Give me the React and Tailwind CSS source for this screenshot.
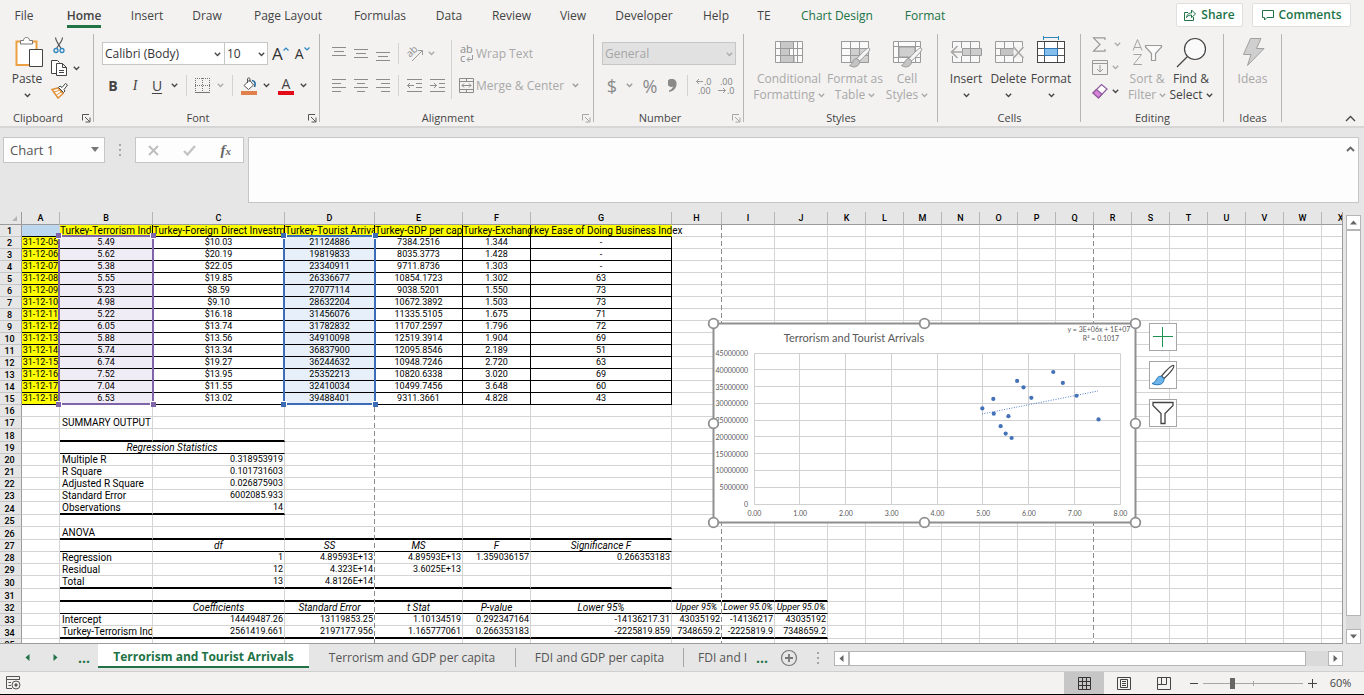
import React from "react";

const MENU = [
  { label: "File", w: "w-[48px]" },
  { label: "Home", w: "w-[72px]", active: true },
  { label: "Insert", w: "w-[54px]" },
  { label: "Draw", w: "w-[66px]" },
  { label: "Page Layout", w: "w-[96px]" },
  { label: "Formulas", w: "w-[88px]" },
  { label: "Data", w: "w-[50px]" },
  { label: "Review", w: "w-[75px]" },
  { label: "View", w: "w-[48px]" },
  { label: "Developer", w: "w-[94px]" },
  { label: "Help", w: "w-[50px]" },
  { label: "TE", w: "w-[46px]" },
  { label: "Chart Design", w: "w-[100px]", green: true },
  { label: "Format", w: "w-[76px]", green: true },
];

function Chevron({ className = "text-[#444]" }) {
  return (
    <svg width="7" height="5" viewBox="0 0 7 5" className={`shrink-0 ${className}`} fill="none" stroke="currentColor" strokeWidth="1.3">
      <path d="M0.8 0.8 3.5 3.5 6.2 0.8" />
    </svg>
  );
}

function Launcher({ dim }) {
  return (
    <button aria-label="More options" className={`absolute right-[3px] bottom-[3px] ${dim ? "text-[#a6a6a6]" : "text-[#555]"}`}>
      <svg width="9" height="9" viewBox="0 0 9 9" fill="none" stroke="currentColor">
        <path d="M0.5 6.5V0.5H7M3 3 7.5 7.5M8 3.5V8H3.5" />
      </svg>
    </button>
  );
}

function Group({ label, width, launcher, dimLauncher, children }) {
  return (
    <section aria-label={label} className={`relative flex shrink-0 flex-col ${width}`}>
      <div className="flex h-[79px] items-start">{children}</div>
      <div className={`text-center text-[11px] leading-4 text-[#444] ${launcher ? "pr-[18px]" : ""}`}>{label}</div>
      {launcher && <Launcher dim={dimLauncher} />}
      <div className="absolute top-[3px] right-0 bottom-1 w-px bg-[#b5b5b5]" />
    </section>
  );
}

function Big({ width, lines, dim, children }) {
  const tone = dim ? "text-[#a8a8a8]" : "text-[#444]";
  return (
    <button className={`flex shrink-0 flex-col items-center pt-[5px] text-xs leading-4 whitespace-nowrap ${width} ${tone}`}>
      <span className="mb-px block h-[34px]">{children}</span>
      <span>{lines[0]}</span>
      <span className="flex h-4 items-center gap-[3px]">
        {lines[1]}
        {lines[1] !== undefined && <Chevron className={tone} />}
      </span>
    </button>
  );
}

function Lines({ rows }) {
  return (
    <svg width="14" height="16" viewBox="0 0 14 16" stroke="#8c8c8c" fill="none">
      {rows.map(([x1, x2, y]) => (
        <path key={y} d={`M${x1} ${y}.5H${x2}`} />
      ))}
    </svg>
  );
}

function Sep() {
  return <div className="h-[21px] w-px shrink-0 bg-[#d2d2d2]" />;
}

function SheetGlyph({ kind }) {
  const line = kind === "format" ? "#444" : "#9a9a9a";
  return (
    <svg width="32" height="34" viewBox="0 0 32 34" fill="none" stroke={line}>
      {kind === "conditional" && (
        <g>
          <path d="M2.5 5.5H29.5V26.5H2.5Z" fill="#fafafa" />
          <path d="M7 6H20V12H7ZM7 13H16V19H7ZM7 20H22V26H7Z" fill="#c8c8c8" stroke="none" />
          <path d="M2.5 12.5H29.5M2.5 19.5H29.5M7.5 5.5V26.5M20.5 5.5V26.5M24.5 5.5V26.5M16.5 12V20" />
        </g>
      )}
      {(kind === "table" || kind === "cell") && (
        <g>
          <path d="M2.5 5.5H29.5V26.5H2.5Z" fill="#fafafa" />
          {kind === "table" ? <path d="M11 12H29V26H11Z" fill="#cfcfcf" stroke="none" /> : <path d="M8 11H24V21H8Z" fill="#cfcfcf" />}
          {kind === "table" ? (
            <path d="M2.5 5.5H29.5V26.5H2.5ZM2.5 12.5H29.5M2.5 19.5H29.5M11.5 5.5V26.5M20.5 5.5V26.5" />
          ) : (
            <path d="M2.5 10.5H29.5M2.5 21.5H29.5M7.5 5.5V26.5M24.5 5.5V26.5" />
          )}
          <path d="M30 12C32 13 30.5 16 20.5 25L18 22.5C25 14.5 29 11.5 30 12Z" fill="#f5f5f5" />
          <path d="M18 22.5C14 22 14 28 10.5 29.5C16 33 21 29.5 20.5 25Z" fill="#c4c4c4" />
        </g>
      )}
      {(kind === "insert" || kind === "delete") && (
        <g>
          <path d="M2.5 5.5H29.5V26.5H2.5ZM2.5 12.5H29.5M2.5 19.5H29.5M11.5 5.5V26.5M20.5 5.5V26.5" fill="#f8f8f8" />
          {kind === "insert" ? (
            <g>
              <path d="M12.5 12.5H31.5V19.5H12.5Z" fill="#cdcdcd" />
              <path d="M20.5 12.5V19.5" />
              <path d="M0 12H12V20H0Z" fill="#f3f2f1" stroke="none" />
              <path d="M13 16H1.5M7.5 10 1.5 16 7.5 22" strokeWidth="1.5" stroke="#a5a5a5" />
            </g>
          ) : (
            <g>
              <path d="M7.5 12.5H19L22 16 19 19.5H7.5Z" fill="#c4c4c4" />
              <path d="M20.5 10.5H31V22H20.5Z" fill="#f3f2f1" stroke="none" />
              <path d="M20.5 11 30.5 22M30.5 11 20.5 22" strokeWidth="1.5" stroke="#a5a5a5" />
            </g>
          )}
        </g>
      )}
      {kind === "format" && (
        <g>
          <path d="M2.5 5.5H29.5V26.5H2.5Z" fill="#fff" />
          <path d="M9.5 12.5H22.5V19.5H9.5Z" fill="#83beec" stroke="none" />
          <path d="M2.5 12.5H29.5M2.5 19.5H29.5M9.5 5.5V26.5M22.5 5.5V26.5" stroke="#555" />
          <path d="M9.5 12.5H22.5V19.5H9.5Z" stroke="#2e75b6" />
          <path d="M8.5 1.5H23.5M8.5 0V4M23.5 0V4" stroke="#2f86b8" />
          <path d="M2.5 5.5H29.5V26.5H2.5Z" />
        </g>
      )}
    </svg>
  );
}

function Ribbon() {
  return (
    <div className="flex h-[95px] shrink-0 overflow-hidden bg-[#f3f2f1]">
      <Group label="Clipboard" width="w-[94px]" launcher>
        <div className="flex pt-[6px] pl-[11px]">
          <button className="flex w-8 flex-col items-center text-xs leading-4 text-[#444]">
            <svg width="30" height="34" viewBox="0 0 30 34" fill="none" className="ml-1">
              <path d="M2.5 4.5H22.5V28H2.5Z" fill="#fff" stroke="#eda043" strokeWidth="2" />
              <path d="M6.5 7V3.5H9.5C9.5 -0.5 15.5 -0.5 15.5 3.5H18.5V7Z" fill="#fff" stroke="#777" />
              <path d="M15.5 12.5H28.5V29.5H15.5Z" fill="#fff" stroke="#444" />
            </svg>
            Paste
            <span className="flex h-4 items-center"><Chevron /></span>
          </button>
          <div className="flex flex-col gap-[6px] pl-2">
            <button aria-label="Cut">
              <svg width="16" height="17" viewBox="0 0 16 17" fill="none">
                <path d="M4.5 0.5C4.5 4 7.5 6.5 10 11.5M11.5 0.5C11.5 4 8 7 5.5 11.5" stroke="#555" strokeWidth="1.2" />
                <circle cx="5" cy="13.5" r="2" stroke="#2e86c1" strokeWidth="1.3" />
                <circle cx="11" cy="13.5" r="2" stroke="#2e86c1" strokeWidth="1.3" />
              </svg>
            </button>
            <button aria-label="Copy" className="flex items-center gap-[5px]">
              <svg width="17" height="17" viewBox="0 0 17 17" fill="#fff" stroke="#444">
                <path d="M6.5 13.5H0.5V0.5H6.5L8.5 2.5" />
                <path d="M5.5 3.5H11.5L15.5 7.5V15.5H5.5ZM11.5 3.5V7.5H15.5M8 10.5H13M8 12.5H13" />
              </svg>
              <Chevron />
            </button>
            <button aria-label="Format Painter">
              <svg width="18" height="16" viewBox="0 0 18 16" fill="none">
                <path d="M1 6.5 7 5 12 10.5 7 15Z" fill="#fff" stroke="#e0913a" strokeWidth="1.6" />
                <path d="M3 9 8 7.5M5.5 12 10 9" stroke="#e0913a" />
                <path d="M7.5 4.5 9 3 11 4.5 14.5 0.5 16.5 2 13 6.5 14 8 12.5 9.5Z" fill="#fff" stroke="#444" />
              </svg>
            </button>
          </div>
        </div>
      </Group>

      <Group label="Font" width="w-[226px]" launcher>
        <div className="flex flex-col gap-[10px] pt-[11px] pl-2">
          <div className="flex h-[23px] items-center text-xs text-[#333]">
            <div className="relative">
              <select aria-label="Font" className="h-[23px] w-[123px] appearance-none border border-[#c6c6c6] bg-white pl-[2px]">
                <option>Calibri (Body)</option>
              </select>
              <Chevron className="pointer-events-none absolute top-[10px] right-1 text-[#444]" />
            </div>
            <div className="relative">
              <select aria-label="Font size" className="h-[23px] w-[43px] appearance-none border border-l-0 border-[#c6c6c6] bg-white pl-[2px]">
                <option>10</option>
              </select>
              <Chevron className="pointer-events-none absolute top-[10px] right-[3px] text-[#444]" />
            </div>
            <button aria-label="Increase font size" className="ml-1 flex items-start text-[17px] leading-5">
              A<svg width="6" height="4" viewBox="0 0 6 4" className="mt-[3px]" fill="none" stroke="#2e86c1" strokeWidth="1.2"><path d="M0.5 3.5 3 1 5.5 3.5" /></svg>
            </button>
            <button aria-label="Decrease font size" className="ml-[6px] flex items-start text-[14px] leading-5">
              A<svg width="6" height="4" viewBox="0 0 6 4" className="mt-[3px]" fill="none" stroke="#2e86c1" strokeWidth="1.2"><path d="M0.5 0.5 3 3 5.5 0.5" /></svg>
            </button>
          </div>
          <div className="flex h-[21px] items-center text-sm leading-5 text-[#444]">
            <button className="w-[22px] font-bold">B</button>
            <button className="w-[22px] font-['Liberation_Serif',serif] italic">I</button>
            <button className="w-[22px] underline underline-offset-2">U</button>
            <button aria-label="Underline style" className="w-[18px] pl-[3px]"><Chevron /></button>
            <Sep />
            <button aria-label="Borders" className="flex w-[45px] items-center gap-[7px] pl-2">
              <svg width="15" height="15" viewBox="0 0 15 15" fill="none" stroke="#777">
                <path d="M0.5 0V14M14.5 0V14M7.5 0V14M0 0.5H15M0 7.5H15" strokeDasharray="1 1" />
                <path d="M0 14.5H15" />
              </svg>
              <Chevron className="text-[#aaa]" />
            </button>
            <Sep />
            <button aria-label="Fill color" className="flex w-[45px] items-center gap-[6px] pl-2">
              <svg width="16" height="18" viewBox="0 0 16 18" fill="none">
                <path d="M3 8.5 8.5 3 12.5 8 7.5 12.5Z" fill="#fff" stroke="#555" />
                <path d="M6.5 6V2C6.5 0.5 9 0.5 9 2V5" stroke="#555" />
                <path d="M11 3.5C14.5 4 14.5 7 13.5 10" stroke="#2368a0" strokeWidth="1.6" />
                <path d="M0 14H16V18H0Z" fill="#e0804a" />
              </svg>
              <Chevron />
            </button>
            <button aria-label="Font color" className="flex items-center gap-[6px]">
              <span className="flex h-[18px] w-4 flex-col items-center justify-end border-b-4 border-[#e30b17] text-[14px] leading-[15px]">A</span>
              <Chevron />
            </button>
          </div>
        </div>
      </Group>

      <Group label="Alignment" width="w-[274px]" launcher dimLauncher>
        <div className="flex flex-col gap-[10px] pt-[11px] pl-3">
          <div className="flex h-[23px] items-center gap-2">
            <button aria-label="Top align"><Lines rows={[[0, 14, 1], [2, 12, 5], [0, 14, 9]]} /></button>
            <button aria-label="Middle align"><Lines rows={[[0, 14, 3], [2, 12, 7], [0, 14, 11]]} /></button>
            <button aria-label="Bottom align"><Lines rows={[[0, 14, 6], [2, 12, 10], [0, 14, 14]]} /></button>
            <Sep />
            <button aria-label="Orientation" className="flex items-center gap-[5px]">
              <svg width="16" height="18" viewBox="0 0 16 18" fill="none" stroke="#999">
                <text x="1" y="12" fontSize="10" fill="#8c8c8c" stroke="none" transform="rotate(-45 3 10)">ab</text>
                <path d="M5 16 15 6M11 5.5H15.5V10" />
              </svg>
              <Chevron className="text-[#aaa]" />
            </button>
          </div>
          <div className="flex h-[21px] items-center gap-2">
            <button aria-label="Align left"><Lines rows={[[0, 14, 1], [0, 9, 5], [0, 14, 9], [0, 9, 13]]} /></button>
            <button aria-label="Center"><Lines rows={[[0, 14, 1], [3, 11, 5], [0, 14, 9], [3, 11, 13]]} /></button>
            <button aria-label="Align right"><Lines rows={[[0, 14, 1], [5, 14, 5], [0, 14, 9], [5, 14, 13]]} /></button>
            <Sep />
            <button aria-label="Decrease indent">
              <svg width="15" height="16" viewBox="0 0 15 16" fill="none" stroke="#8c8c8c">
                <path d="M0 1.5H15M9 5.5H15M9 9.5H15M0 13.5H15M7 7.5H0.5M3 5 0.5 7.5 3 10" />
              </svg>
            </button>
            <button aria-label="Increase indent">
              <svg width="15" height="16" viewBox="0 0 15 16" fill="none" stroke="#8c8c8c">
                <path d="M0 1.5H15M9 5.5H15M9 9.5H15M0 13.5H15M0 7.5H6.5M4 5 6.5 7.5 4 10" />
              </svg>
            </button>
          </div>
        </div>
        <div className="mt-[9px] ml-[6px] h-[59px] w-px bg-[#d2d2d2]" />
        <div className="flex flex-col gap-[10px] pt-[11px] pl-[7px] text-xs text-[#a8a8a8]">
          <button className="flex h-[23px] items-center gap-[2px]">
            <svg width="15" height="20" viewBox="0 0 15 20" fill="none" stroke="#999" fontSize="11">
              <text x="1" y="9" fill="#8c8c8c" stroke="none">ab</text>
              <text x="1" y="18" fill="#8c8c8c" stroke="none">c</text>
              <path d="M13.5 11V15.5H8.5M10.5 13 8 15.5 10.5 18" />
            </svg>
            Wrap Text
          </button>
          <button className="flex h-[21px] items-center gap-[2px]">
            <svg width="15" height="15" viewBox="0 0 15 15" fill="none" stroke="#8c8c8c">
              <path d="M0.5 0.5H14.5V14.5H0.5ZM0.5 3.5H14.5M0.5 11.5H14.5M7.5 0.5V3.5M7.5 11.5V14.5M3 7.5H12M5 5.5 3 7.5 5 9.5M10 5.5 12 7.5 10 9.5" />
            </svg>
            Merge &amp; Center
            <Chevron className="ml-[6px] text-[#999]" />
          </button>
        </div>
      </Group>

      <Group label="Number" width="w-[150px]" launcher dimLauncher>
        <div className="flex flex-col gap-[10px] pt-[11px] pl-2">
          <div className="relative">
            <select aria-label="Number format" className="block h-[23px] w-[134px] appearance-none border border-[#c6c6c6] bg-[#e1e1e1] pl-[2px] text-xs text-[#a6a6a6]">
              <option>General</option>
            </select>
            <Chevron className="pointer-events-none absolute top-[10px] right-[3px] text-[#aaa]" />
          </div>
          <div className="flex h-[21px] items-center text-[18px] leading-5 text-[#8a8a8a]">
            <button className="w-[24px] pr-1" aria-label="Accounting format">$</button>
            <button className="w-[14px]" aria-label="Currency list"><Chevron className="text-[#999]" /></button>
            <button className="w-[20px]">%</button>
            <button className="ml-1 w-[23px] pl-1" aria-label="Comma style">
              <svg width="9" height="13" viewBox="0 0 9 13" fill="#8a8a8a"><path d="M4 0A4 4 0 1 0 5 7.5C4.5 9.5 3 10.5 1 11.5V13C6 12 9 8.5 8.5 4A4.2 4.2 0 0 0 4 0Z" /></svg>
            </button>
            <Sep />
            <div className="flex gap-[5px] pl-2">
              <button aria-label="Increase decimal">
                <svg width="17" height="18" viewBox="0 0 17 18" fontSize="9" fill="#808080">
                  <text x="8" y="8">.0</text><text x="2" y="17">.00</text>
                  <path d="M7 4.5H0.5M3 2 0.5 4.5 3 7" fill="none" stroke="#999" />
                </svg>
              </button>
              <button aria-label="Decrease decimal">
                <svg width="17" height="18" viewBox="0 0 17 18" fontSize="9" fill="#808080">
                  <text x="2" y="8">.00</text><text x="9" y="17">.0</text>
                  <path d="M0 13.5H7.5M5 11 7.5 13.5 5 16" fill="none" stroke="#999" />
                </svg>
              </button>
            </div>
          </div>
        </div>
      </Group>

      <Group label="Styles" width="w-[194px]">
        <div className="flex pl-2">
          <Big width="w-[74px]" dim lines={["Conditional", "Formatting"]}><SheetGlyph kind="conditional" /></Big>
          <Big width="w-[58px]" dim lines={["Format as", "Table"]}><SheetGlyph kind="table" /></Big>
          <Big width="w-[46px]" dim lines={["Cell", "Styles"]}><SheetGlyph kind="cell" /></Big>
        </div>
      </Group>

      <Group label="Cells" width="w-[143px]">
        <div className="flex pl-[7px]">
          <Big width="w-[42px]" lines={["Insert", ""]}><SheetGlyph kind="insert" /></Big>
          <Big width="w-[43px]" lines={["Delete", ""]}><SheetGlyph kind="delete" /></Big>
          <Big width="w-[42px]" lines={["Format", ""]}><SheetGlyph kind="format" /></Big>
        </div>
      </Group>

      <Group label="Editing" width="w-[143px]">
        <div className="flex w-[43px] flex-col gap-2 pt-[6px] pl-[11px]">
          <button aria-label="AutoSum" className="flex items-center gap-[7px]">
            <svg width="15" height="15" viewBox="0 0 15 15" fill="none" stroke="#999" strokeWidth="1.2"><path d="M13 3V0.8H1.5L8 7.5 1.5 14.2H13V12" /></svg>
            <Chevron className="text-[#aaa]" />
          </button>
          <button aria-label="Fill" className="flex items-center gap-1">
            <svg width="16" height="15" viewBox="0 0 16 15" fill="none" stroke="#999"><path d="M0.5 0.5H15.5V14.5H0.5ZM0.5 3.5H15.5M8 5V12M5 9 8 12 11 9" /></svg>
            <Chevron className="text-[#aaa]" />
          </button>
          <button aria-label="Clear" className="flex items-center gap-1">
            <svg width="16" height="16" viewBox="0 0 16 16" fill="none" stroke="#8e5a9b" strokeWidth="1.2">
              <path d="M1 10 9.5 1.5 15 6 6.5 15Z" fill="#fff" />
              <path d="M1 10 4.5 6.5 10 11 6.5 15Z" fill="#d884d8" />
            </svg>
            <Chevron />
          </button>
        </div>
        <Big width="w-[46px]" dim lines={["Sort &", "Filter"]}>
          <svg width="32" height="34" viewBox="0 0 32 34" fill="none" stroke="#999">
            <path d="M2 14.5 6.5 3.5 11 14.5M3.5 11.5H9.5M2.5 18.5H10.5L2.5 28.5H11" stroke="#a3a3a3" />
            <path d="M14.5 9.5H30.5V11L24.5 17.5V24.5H20.5V17.5L14.5 11Z" strokeWidth="1.2" fill="#fafafa" />
          </svg>
        </Big>
        <Big width="w-[42px]" lines={["Find &", "Select"]}>
          <svg width="32" height="34" viewBox="0 0 32 34" fill="none" stroke="#444" strokeWidth="1.2">
            <circle cx="20" cy="13" r="10.5" fill="#fafafa" /><path d="M12.5 20.5 2 31" />
          </svg>
        </Big>
      </Group>

      <Group label="Ideas" width="w-[58px]">
        <Big width="w-[57px]" dim lines={["Ideas"]}>
          <svg width="24" height="34" viewBox="0 0 24 34" fill="#cfcfcf" stroke="#a0a0a0"><path d="M9.5 2.5H20L15.5 12.5H23L6.5 29.5L10 18.5H2.5Z" /></svg>
        </Big>
      </Group>
      <div className="flex flex-1 items-end justify-end pr-2 pb-1">
        <button aria-label="Collapse ribbon">
          <svg width="11" height="7" viewBox="0 0 11 7" fill="none" stroke="#444" strokeWidth="1.3"><path d="M1 6 5.5 1.5 10 6" /></svg>
        </button>
      </div>
    </div>
  );
}

function FormulaBar() {
  return (
    <div className="flex h-[84px] shrink-0 items-start bg-[#e6e6e6] pt-[9px] pr-[5px] pl-[3px]">
      <div className="relative">
        <input aria-label="Name box" defaultValue="Chart 1" className="block h-[26px] w-[102px] border border-[#c6c6c6] bg-[#fdfdfd] pl-[6px] text-[13px] text-[#555]" />
        <svg width="8" height="5" viewBox="0 0 8 5" className="absolute top-[10px] right-[6px]" fill="#777"><path d="M0 0H8L4 5Z" /></svg>
      </div>
      <svg width="30" height="26" viewBox="0 0 30 26" fill="#a6a6a6"><path d="M14 7h2v2h-2zM14 12h2v2h-2zM14 17h2v2h-2z" /></svg>
      <div className="mr-1 flex h-[26px] w-[109px] items-center justify-around border border-[#c6c6c6] bg-[#fdfdfd]">
        <button aria-label="Cancel"><svg width="11" height="11" viewBox="0 0 11 11" stroke="#bdbdbd" strokeWidth="1.8"><path d="M1 1 10 10M10 1 1 10" /></svg></button>
        <button aria-label="Enter"><svg width="13" height="11" viewBox="0 0 13 11" stroke="#c4c4c4" strokeWidth="2.4" fill="none"><path d="M1 6 4.5 9.5 12 1" /></svg></button>
        <button aria-label="Insert function" className="font-['Liberation_Serif',serif] text-[15px] leading-5 font-bold text-[#666] italic">f<span className="text-[11px]">x</span></button>
      </div>
      <div className="relative flex-1">
        <textarea aria-label="Formula" className="block h-[66px] w-full resize-none border border-[#c6c6c6] bg-[#fdfdfd]" />
        <svg width="9" height="6" viewBox="0 0 9 6" className="absolute top-[9px] right-1" fill="none" stroke="#666" strokeWidth="1.8"><path d="M1 5 4.5 1.5 8 5" /></svg>
      </div>
    </div>
  );
}

const COLS = "ABCDEFGHIJKLMNOPQRSTUVWX".split("");
const COL_W = [38, 93, 132, 90, 88, 68, 141, 50, 53, 53, 38, 38, 38, 38, 38, 38, 38, 38, 38, 38, 38, 38, 38, 38];
const TABLE_W = 22 + COL_W.reduce((a, b) => a + b, 0);

const DATA = [
  ["31-12-05", "5.49", "$10.03", "21124886", "7384.2516", "1.344", "-"],
  ["31-12-06", "5.62", "$20.19", "19819833", "8035.3773", "1.428", "-"],
  ["31-12-07", "5.38", "$22.05", "23340911", "9711.8736", "1.303", "-"],
  ["31-12-08", "5.55", "$19.85", "26336677", "10854.1723", "1.302", "63"],
  ["31-12-09", "5.23", "$8.59", "27077114", "9038.5201", "1.550", "73"],
  ["31-12-10", "4.98", "$9.10", "28632204", "10672.3892", "1.503", "73"],
  ["31-12-11", "5.22", "$16.18", "31456076", "11335.5105", "1.675", "71"],
  ["31-12-12", "6.05", "$13.74", "31782832", "11707.2597", "1.796", "72"],
  ["31-12-13", "5.88", "$13.56", "34910098", "12519.3914", "1.904", "69"],
  ["31-12-14", "5.74", "$13.34", "36837900", "12095.8546", "2.189", "51"],
  ["31-12-15", "6.74", "$19.27", "36244632", "10948.7246", "2.720", "63"],
  ["31-12-16", "7.52", "$13.95", "25352213", "10820.6338", "3.020", "69"],
  ["31-12-17", "7.04", "$11.55", "32410034", "10499.7456", "3.648", "60"],
  ["31-12-18", "6.53", "$13.02", "39488401", "9311.3661", "4.828", "43"],
];

const HEADERS = ["", "Turkey-Terrorism Index", "Turkey-Foreign Direct Investment", "Turkey-Tourist Arrivals", "Turkey-GDP per capita", "Turkey-Exchange", "Turkey Ease of Doing Business Index"];

const LOWER = {
  17: ["", "SUMMARY OUTPUT"],
  20: ["", "Multiple R", "0.318953919"],
  21: ["", "R Square", "0.101731603"],
  22: ["", "Adjusted R Square", "0.026875903"],
  23: ["", "Standard Error", "6002085.933"],
  24: ["", "Observations", "14"],
  26: ["", "ANOVA"],
  27: ["", "", "df", "SS", "MS", "F", "Significance F"],
  28: ["", "Regression", "1", "4.89593E+13", "4.89593E+13", "1.359036157", "0.266353183"],
  29: ["", "Residual", "12", "4.323E+14", "3.6025E+13"],
  30: ["", "Total", "13", "4.8126E+14"],
  32: ["", "", "Coefficients", "Standard Error", "t Stat", "P-value", "Lower 95%", "Upper 95%", "Lower 95.0%", "Upper 95.0%"],
  33: ["", "Intercept", "14449487.26", "13119853.25", "1.10134519", "0.292347164", "-14136217.31", "43035192", "-14136217", "43035192"],
  34: ["", "Turkey-Terrorism Index", "2561419.661", "2197177.956", "1.165777061", "0.266353183", "-2225819.859", "7348659.2", "-2225819.9", "7348659.2"],
};

const RULES = { 18: [2, 2], 19: [1, 2], 24: [2, 2], 26: [2, 6], 27: [1, 6], 30: [2, 6], 31: [2, 9], 32: [1, 9], 34: [2, 9] };

function Cell({ row, col, span }) {
  let text = "";
  let bg = "bg-white";
  let box = "justify-center overflow-hidden text-[9px]";
  let right = "border-r-[#d4d4d4]";
  let bottom = "border-b border-b-[#d4d4d4]";
  if (row === 1) {
    text = HEADERS[col] || "";
    if (col === 0) bg = "bg-[#bdd7ee]";
    else if (col < 7) {
      bg = "bg-[#ffff00]";
      right = col < 6 ? "border-r-black" : "border-r-[#ffff00]";
      box = col === 6 ? "justify-center text-[10px] [clip-path:inset(0_-12px_0_0)]" : "justify-start overflow-hidden text-[10px]";
    }
    if (col < 7) bottom = "border-b border-b-black";
  } else if (row <= 15) {
    text = DATA[row - 2][col] || "";
    if (col < 7) {
      bottom = "border-b border-b-black";
      right = "border-r-black";
      if (col === 0) {
        bg = "bg-[#ffff00]";
        box = "justify-end overflow-hidden pr-px text-[9px]";
      }
      if (col === 1) bg = "bg-[#f0ecf6]";
      if (col === 3) bg = "bg-[#e7f0fa]";
    }
  } else {
    text = (LOWER[row] || [])[col] || "";
    if (row === 19 && col === 1) text = "Regression Statistics";
    if (row === 27 || row === 32 || row === 19) box = col < 7 ? "justify-center overflow-hidden text-[10px] italic" : "justify-center overflow-hidden text-[9px] italic";
    else if (col === 1) box = "justify-start overflow-hidden pl-[2px] text-[10px]";
    else box = "justify-end overflow-hidden pr-px text-[9px]";
    const rule = RULES[row];
    if (rule && col >= 1 && col <= rule[1]) bottom = rule[0] === 2 ? "border-b-2 border-b-black" : "border-b border-b-black";
  }
  return (
    <td colSpan={span} className={`border-r p-0 ${bg} ${right} ${bottom}`}>
      <div className={`flex h-[11px] leading-[11px] whitespace-nowrap text-black ${box}`}>{text}</div>
    </td>
  );
}

function Grid() {
  return (
    <table className="table-fixed border-separate border-spacing-0 font-[Roboto,sans-serif]" style={{ width: TABLE_W }}>
      <colgroup>
        <col style={{ width: 22 }} />
        {COL_W.map((w, i) => <col key={i} style={{ width: w }} />)}
      </colgroup>
      <thead>
        <tr>
          <th className="border-r border-b border-[#9b9b9b] bg-[#e6e6e6] p-0">
            <svg width="5" height="5" viewBox="0 0 5 5" className="ml-3" fill="#b5b5b5"><path d="M5 0V5H0Z" /></svg>
          </th>
          {COLS.map((c) => (
            <th key={c} className="border-r border-b border-r-[#b5b5b5] border-b-[#9b9b9b] bg-[#e6e6e6] p-0 text-[9px] font-medium text-black">
              <div className="h-3 leading-[12px]">{c}</div>
            </th>
          ))}
        </tr>
      </thead>
      <tbody>
        {Array.from({ length: 35 }, (_, i) => i + 1).map((row) => (
          <tr key={row}>
            <th className="border-r border-b border-r-[#9b9b9b] border-b-[#c6c6c6] bg-[#e6e6e6] p-0 pr-[2px] text-[9px] font-medium text-black">
              <div className="h-[11px] leading-[12px]">{row}</div>
            </th>
            {COLS.map((c, col) =>
              row === 19 && col === 2 ? null : <Cell key={c} row={row} col={col} span={row === 19 && col === 1 ? 2 : undefined} />
            )}
          </tr>
        ))}
      </tbody>
    </table>
  );
}

function RangeMark({ place, tone, dot }) {
  return (
    <div className={`pointer-events-none absolute top-[23px] h-[170px] border-2 ${place} ${tone}`}>
      <i className={`absolute -top-[4px] -left-[4px] size-[6px] border-r border-b border-white ${dot}`} />
      <i className={`absolute -top-[4px] -right-[4px] size-[6px] border-b border-l border-white ${dot}`} />
      <i className={`absolute -bottom-[4px] -left-[4px] size-[6px] border-t border-r border-white ${dot}`} />
      <i className={`absolute -right-[4px] -bottom-[4px] size-[6px] border-t border-l border-white ${dot}`} />
    </div>
  );
}

function ScatterChart() {
  const px = (v) => 41.5 + 45.75 * v;
  const py = (v) => 181.5 - (151 * v) / 45e6;
  return (
    <svg width="440" height="218" viewBox="-9 -9 440 218" className="absolute top-[102px] left-[704px]" fontFamily="Lato, sans-serif" fill="#595959">
      <rect x="0.5" y="0.5" width="422" height="199" fill="#fff" stroke="#8f8f8f" strokeWidth="2" />
      <text x="141" y="19" fontSize="11" textAnchor="middle">Terrorism and Tourist Arrivals</text>
      <text x="386" y="9" fontSize="7" textAnchor="middle">y = 3E+06x + 1E+07</text>
      <text x="388" y="18" fontSize="7" textAnchor="middle">R² = 0.1017</text>
      {Array.from({ length: 10 }, (_, i) => (
        <g key={i}>
          <path d={`M41.5 ${Math.round(py(i * 5e6)) - 0.5}H407.5`} stroke="#d0d0d0" />
          <text x="35" y={py(i * 5e6) + 2.5} fontSize="7" textAnchor="end">{i * 5000000}</text>
        </g>
      ))}
      {Array.from({ length: 9 }, (_, i) => (
        <g key={i}>
          <path d={`M${Math.round(px(i)) - 0.5} 30.5V181.5`} stroke="#d0d0d0" />
          <text x={px(i)} y="193" fontSize="7" textAnchor="middle">{i.toFixed(2)}</text>
        </g>
      ))}
      <path d="M269 91 385 68" stroke="#4472c4" strokeDasharray="1 1.5" strokeWidth="0.9" />
      {DATA.map((r) => <circle key={r[0]} cx={px(Number(r[1]))} cy={py(Number(r[3]))} r="2.1" fill="#4472b8" />)}
      {[[0, 0], [211, 0], [422, 0], [0, 100], [422, 100], [0, 199], [211, 199], [422, 199]].map(([x, y]) => (
        <circle key={`${x}-${y}`} cx={x + 0.5} cy={y + 0.5} r="4.8" fill="#fff" stroke="#8f8f8f" strokeWidth="1.8" />
      ))}
    </svg>
  );
}

function ChartButtons() {
  const cls = "flex size-7 items-center justify-center border border-[#a6a6a6] bg-white";
  return (
    <div className="absolute top-[111px] left-[1149px] flex flex-col gap-[10px]">
      <button aria-label="Chart elements" className={cls}>
        <svg width="22" height="22" viewBox="0 0 22 22" stroke="#1e9150"><path d="M1 10.5H21M10.5 1V21" /></svg>
      </button>
      <button aria-label="Chart styles" className={cls}>
        <svg width="24" height="22" viewBox="0 0 24 22" fill="none">
          <path d="M22.5 1.5C24 3 20 8 13 14.5L10.5 12C16.5 5 21 0.5 22.5 1.5Z" fill="#fff" stroke="#444" strokeWidth="1.2" />
          <path d="M10.5 12.5C5 11 6.5 18 1 19.5C6 22 13.5 21 13 14.5Z" fill="#6db5ea" stroke="#2b78b5" />
        </svg>
      </button>
      <button aria-label="Chart filters" className={cls}>
        <svg width="22" height="24" viewBox="0 0 22 24" fill="#fff" stroke="#444" strokeWidth="1.3"><path d="M1 1.5H21V4.5L13 12.5V22.5H9V12.5L1 4.5Z" /></svg>
      </button>
    </div>
  );
}

function Arrow({ d, tone = "#666" }) {
  return <svg width="7" height="7" viewBox="0 0 7 7" fill={tone}><path d={d} /></svg>;
}

function SheetArea() {
  const dash = "pointer-events-none absolute bottom-0 w-px bg-[repeating-linear-gradient(to_bottom,#8c8c8c_0_5px,#fff_5px_8px)]";
  const btn = "flex size-[15px] shrink-0 items-center justify-center border border-[#b5b5b5] bg-white";
  return (
    <div className="flex min-h-0 flex-1 bg-[#e6e6e6]">
      <main className="relative min-w-0 flex-1 overflow-hidden border-r border-b border-[#9b9b9b]">
        <Grid />
        <div className={`${dash} top-[195px] left-[374px]`} />
        <div className={`${dash} top-[13px] left-[721px]`} />
        <div className={`${dash} top-[13px] left-[1093px]`} />
        <RangeMark place="left-[58px] w-[96px]" tone="border-[#7f64a8]" dot="bg-[#7f64a8]" />
        <RangeMark place="left-[283px] w-[93px]" tone="border-[#3b6cb5]" dot="bg-[#3b6cb5]" />
        <ScatterChart />
        <ChartButtons />
      </main>
      <div className="flex w-[21px] shrink-0 flex-col pt-[3px] pl-[3px]">
        <button aria-label="Scroll up" className={btn}><Arrow d="M0 5.5H7L3.5 1.5Z" /></button>
        <div className="flex w-[15px] flex-1 flex-col bg-[#dadada] pb-[13px]">
          <div className="flex-1 border border-[#b5b5b5] bg-white" />
        </div>
        <button aria-label="Scroll down" className={btn}><Arrow d="M0 1.5H7L3.5 5.5Z" /></button>
      </div>
    </div>
  );
}

function SheetTabs() {
  const btn = "flex size-[15px] shrink-0 items-center justify-center border border-[#b5b5b5] bg-white";
  return (
    <div className="flex h-7 shrink-0 border-b border-[#cfcfcf] bg-[#e6e6e6] text-[12px] text-[#555]">
      <div className="flex w-[98px] shrink-0 items-center pl-6 text-[#217346]">
        <button aria-label="Previous sheet" className="w-7"><Arrow d="M5.5 0V7L1.5 3.5Z" tone="#217346" /></button>
        <button aria-label="Next sheet" className="w-[26px]"><Arrow d="M1.5 0V7L5.5 3.5Z" tone="#217346" /></button>
        <button className="text-sm leading-5 font-bold">...</button>
      </div>
      <button className="mb-[3px] w-[211px] shrink-0 border-b-2 border-[#217346] bg-white pt-1 font-bold text-[#217346]">Terrorism and Tourist Arrivals</button>
      <div className="flex items-center">
        <button className="w-[206px] whitespace-nowrap">Terrorism and GDP per capita</button>
        <div className="h-[19px] w-px bg-[#a6a6a6]" />
        <button className="w-[167px] whitespace-nowrap">FDI and GDP per capita</button>
        <div className="h-[19px] w-px bg-[#a6a6a6]" />
        <button className="w-[72px] pl-[14px] text-left whitespace-nowrap">FDI and I</button>
        <button className="w-[24px] text-left text-sm leading-5 font-bold text-[#217346]">...</button>
        <button aria-label="New sheet">
          <svg width="18" height="18" viewBox="0 0 18 18" fill="none" stroke="#777" strokeWidth="1.2"><circle cx="9" cy="9" r="7.5" /><path d="M9 5V13M5 9H13" strokeWidth="1.8" /></svg>
        </button>
        <svg width="36" height="14" viewBox="0 0 36 14" fill="#a6a6a6"><path d="M19 1h2v2h-2zM19 6h2v2h-2zM19 11h2v2h-2z" /></svg>
      </div>
      <div className="mt-[7px] mr-[21px] flex h-[15px] flex-1">
        <button aria-label="Scroll left" className={btn}><Arrow d="M5.5 0V7L1.5 3.5Z" /></button>
        <div className="flex flex-1 bg-[#dadada] pr-[22px]"><div className="flex-1 border border-[#b5b5b5] bg-white" /></div>
        <button aria-label="Scroll right" className={btn}><Arrow d="M1.5 0V7L5.5 3.5Z" /></button>
      </div>
    </div>
  );
}

function StatusBar() {
  return (
    <footer className="flex h-[23px] shrink-0 items-stretch border-b border-black bg-[#f3f2f1] text-[#444]">
      <button aria-label="Record macro" className="flex flex-1 items-center pl-[6px]">
        <svg width="15" height="14" viewBox="0 0 15 14" fill="none" stroke="#555">
          <path d="M6 12.5H0.5V0.5H13.5V4M0.5 3.5H13.5M2.5 6.5H5M2.5 9.5H5" />
          <circle cx="10" cy="9" r="4" /><circle cx="10" cy="9" r="1.2" fill="#555" />
        </svg>
      </button>
      <button aria-label="Normal view" className="flex w-10 items-center justify-center bg-[#c6c6c6]">
        <svg width="13" height="13" viewBox="0 0 13 13" fill="none" stroke="#333"><path d="M0.5 0.5H12.5V12.5H0.5ZM4.5 0V13M8.5 0V13M0 4.5H13M0 8.5H13" /></svg>
      </button>
      <button aria-label="Page layout view" className="flex w-10 items-center justify-center">
        <svg width="14" height="13" viewBox="0 0 14 13" fill="none" stroke="#444"><path d="M0.5 0.5H13.5V12.5H0.5ZM3.5 2.5H10.5V10.5H3.5ZM5 4.5H9M5 6.5H9M5 8.5H9" /></svg>
      </button>
      <button aria-label="Page break view" className="flex w-10 items-center justify-center">
        <svg width="14" height="13" viewBox="0 0 14 13" fill="none" stroke="#444"><path d="M0.5 0.5H13.5V12.5H0.5ZM0.5 7.5H9.5M4.5 0.5V7.5M9.5 0.5V7.5" /></svg>
      </button>
      <div className="flex items-center pl-[6px]">
        <button aria-label="Zoom out"><svg width="8" height="8" viewBox="0 0 8 8" stroke="#444"><path d="M0 4.5H8" /></svg></button>
        <div className="relative mr-[5px] ml-[5px] flex h-3 w-[100px] items-center">
          <input
            type="range"
            aria-label="Zoom"
            min="0"
            max="100"
            defaultValue="28"
            className="h-px w-full appearance-none bg-[#a6a6a6] [&::-webkit-slider-thumb]:h-[11px] [&::-webkit-slider-thumb]:w-[5px] [&::-webkit-slider-thumb]:appearance-none [&::-webkit-slider-thumb]:rounded-none [&::-webkit-slider-thumb]:bg-[#666]"
          />
          <div className="absolute top-1 left-1/2 h-[5px] w-px bg-[#a6a6a6]" />
        </div>
        <button aria-label="Zoom in"><svg width="9" height="9" viewBox="0 0 9 9" stroke="#444"><path d="M0 4.5H9M4.5 0V9" /></svg></button>
      </div>
      <button className="w-[47px] text-[11px]">60%</button>
    </footer>
  );
}

export default function App() {
  return (
    <div className="flex h-screen flex-col overflow-hidden bg-[#f3f2f1] font-['Open_Sans','Noto_Sans',sans-serif]">
      <header className="flex h-[31px] shrink-0 items-stretch bg-[#f3f2f1] text-xs text-[#444]">
        <nav className="flex">
          {MENU.map((m) => (
            <a key={m.label} href="#" className={`flex shrink-0 items-start justify-center pt-2 leading-4 whitespace-nowrap ${m.w} ${m.green ? "text-[#217346]" : ""}`}>
              <span className={m.active ? "border-b-[3px] border-[#217346] pb-px font-semibold" : ""}>{m.label}</span>
            </a>
          ))}
        </nav>
        <div className="ml-auto flex gap-[9px] pt-[3px] pr-[13px] pb-1 font-semibold text-[#217346]">
          <button className="flex w-[67px] items-center justify-center gap-[5px] rounded-xs border border-[#e1dfdd] bg-white">
            <svg width="12" height="12" viewBox="0 0 12 12" fill="none" stroke="#217346"><path d="M4 3.5H0.5V11.5H9.5V8M2.5 8.5C3 5 5 4 7.5 4V1L11.5 5 7.5 8.5V6C5.5 6 4 6.5 2.5 8.5Z" /></svg>
            Share
          </button>
          <button className="flex w-[99px] items-center justify-center gap-[5px] rounded-xs border border-[#e1dfdd] bg-white">
            <svg width="12" height="12" viewBox="0 0 12 12" fill="none" stroke="#217346"><path d="M0.5 1.5H11.5V8.5H5L2.5 11V8.5H0.5Z" /></svg>
            Comments
          </button>
        </div>
      </header>
      <Ribbon />
      <div className="h-[2px] shrink-0 bg-[#d6d6d6]" />
      <FormulaBar />
      <SheetArea />
      <SheetTabs />
      <StatusBar />
    </div>
  );
}
